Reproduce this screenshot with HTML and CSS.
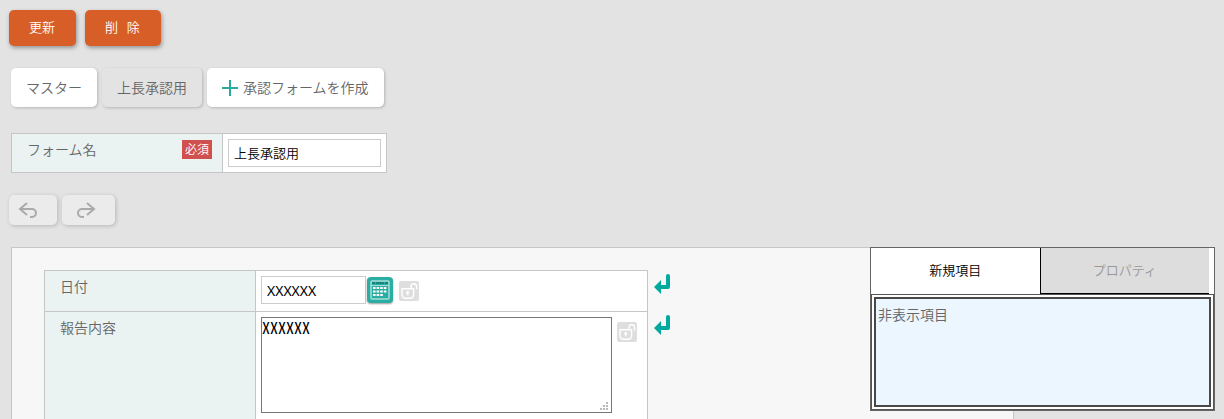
FILE: index.html
```html
<!DOCTYPE html>
<html lang="ja">
<head>
  <meta charset="UTF-8">
  <meta name="viewport" content="width=device-width, initial-scale=1.0">
  <title>承認フォーム編集</title>
  <link rel="stylesheet" href="styles.css">
</head>
<body>
  <svg class="symbols" width="0" height="0" aria-hidden="true">
    <symbol id="lock" viewBox="0 0 20 20">
      <rect width="20" height="20" rx="2" fill="#dedede"/>
      <path d="M3 7.8h11.6v6a3.4 3.4 0 0 1-3.4 3.4H6.4A3.4 3.4 0 0 1 3 13.8z" fill="none" stroke="#fff" stroke-width="1.4" stroke-linejoin="round"/>
      <path d="M12 7.5V5.6a2.8 2.8 0 0 1 5.6 0v2.6" fill="none" stroke="#fff" stroke-width="1.4"/>
      <circle cx="8.7" cy="11.6" r="1.5" fill="#fff"/>
      <path d="M8.7 11.5v3" stroke="#fff" stroke-width="1.2"/>
    </symbol>
    <symbol id="enter" viewBox="0 0 16 20">
      <path d="M12 2a2 2 0 0 1 4 0v11a2 2 0 0 1-2 2H7v5L0 13l7-7v5h5z" fill="#00a99d"/>
    </symbol>
  </svg>

  <div class="actions">
    <button class="btn-main" type="button">更新</button>
    <button class="btn-main" type="button">削&nbsp;&nbsp;&nbsp;除</button>
  </div>

  <div class="form-tabs">
    <button class="form-tab" type="button">マスター</button>
    <button class="form-tab current" type="button">上長承認用</button>
    <button class="form-tab" type="button">
      <svg width="16" height="16" viewBox="0 0 16 16" aria-hidden="true"><path d="M8 0v16M0 8h16" stroke="#2aaa9f" stroke-width="2"/></svg>
      <span>承認フォームを作成</span>
    </button>
  </div>

  <div class="form-name">
    <label for="formName">フォーム名 <span class="required">必須</span></label>
    <div class="form-name-value"><input id="formName" class="text" type="text" value="上長承認用"></div>
  </div>

  <div class="history">
    <button class="btn-history undo" type="button" aria-label="元に戻す">
      <svg width="20" height="18" viewBox="0 0 20 18"><path d="M9 2L2 8l7 6M2 8h12a4 4 0 0 1 0 8h-2" /></svg>
    </button>
    <button class="btn-history redo" type="button" aria-label="やり直す">
      <svg width="20" height="18" viewBox="0 0 20 18"><path d="M11 2l7 6-7 6M18 8H6a4 4 0 0 0 0 8h2" /></svg>
    </button>
  </div>

  <div class="workspace">
    <div class="canvas">
      <table class="fields">
        <tr>
          <th scope="row"><label for="date">日付</label></th>
          <td>
            <div class="field">
              <input id="date" class="text date" type="text" value="XXXXXX">
              <button class="calendar" type="button" aria-label="カレンダー">
                <svg width="20" height="20" viewBox="0 0 20 20">
                  <rect x="1" y="1" width="18" height="18" rx="1" fill="none" stroke="#a5ddd7" stroke-width="1.5"/>
                  <path d="M2 3h3M6 3h8M15 3h3" stroke="#16877e" stroke-width="2"/>
                  <path d="M1 5.5h18" stroke="#a5ddd7"/>
                  <path d="M3 8h14M3 11.5h14M3 15h10" stroke="#fff" stroke-width="2.2" stroke-dasharray="2.6 1"/>
                </svg>
              </button>
              <svg class="lock" width="20" height="20"><use href="#lock"/></svg>
            </div>
          </td>
          <td class="break"><svg width="16" height="20"><use href="#enter"/></svg></td>
        </tr>
        <tr class="report">
          <th scope="row"><label for="report">報告内容</label></th>
          <td>
            <div class="field">
              <div class="area">
                <textarea id="report">XXXXXX</textarea>
                <svg class="grip" width="8" height="8" viewBox="0 0 8 8" aria-hidden="true"><path d="M6 0h2v2H6zM3 3h2v2H3zM6 3h2v2H6zM0 6h2v2H0zM3 6h2v2H3zM6 6h2v2H6z" fill="#bbb"/></svg>
              </div>
              <svg class="lock" width="20" height="20"><use href="#lock"/></svg>
            </div>
          </td>
          <td class="break"><svg width="16" height="20"><use href="#enter"/></svg></td>
        </tr>
      </table>
    </div>

    <!-- floats over the right edge of the canvas -->
    <div class="panel">
      <div class="panel-tabs">
        <button class="panel-tab" type="button">新規項目</button>
        <button class="panel-tab off" type="button">プロパティ</button>
      </div>
      <div class="panel-body">
        <div class="hidden-items">非表示項目</div>
      </div>
    </div>
  </div>
</body>
</html>
```
FILE: styles.css
```css
* { box-sizing: border-box; }
body { display: flex; flex-direction: column; height: 100vh; margin: 0; padding: 10px 9px 0; overflow: hidden; background: #e3e3e3; color: #666; font: 14px/20px "Noto Sans CJK JP", sans-serif; font-weight: 350; }
button, input { font: inherit; }
button { margin: 0; border: none; cursor: pointer; }
svg { display: block; flex: none; }
.symbols { position: absolute; }

.actions { display: flex; gap: 9px; }
.btn-main { height: 36px; padding: 0 21px 2px 20px; border-radius: 5px; background: #d75f27; color: #fff; font-size: 13px; box-shadow: 1px 2px 4px rgba(0, 0, 0, 0.35); }

.form-tabs { display: flex; gap: 5px; margin: 22px 2px 0; }
.form-tab { display: flex; align-items: center; gap: 5px; height: 39px; padding: 0 15px; border-radius: 5px; background: #fff; color: #666; line-height: 16px; box-shadow: 1px 1px 3px rgba(0, 0, 0, 0.2); }
.form-tab { padding-bottom: 2px; }
.form-tab svg { margin-top: 2px; }
.form-tab.current { background: #e3e3e3; }

.form-name { display: flex; width: 376px; margin: 26px 2px 0; border: 1px solid #c6c6c6; background: #fff; }
.form-name label { display: flex; justify-content: space-between; width: 211px; padding: 6px 10px 0 15px; border-right: 1px solid #c6c6c6; background: #eaf3f2; line-height: 18px; }
.required { height: 19px; padding: 0 3px; background: #d05050; color: #fff; font-size: 12px; line-height: 18px; }
.form-name-value { flex: 1; padding: 5px; }
.text { display: block; width: 100%; height: 28px; padding: 0 5px 2px; border: 1px solid #ccc; background: #fff; color: #000; font-size: 13px; }

.history { display: flex; gap: 5px; margin-top: 22px; }
.btn-history { height: 30px; border-radius: 5px; background: #ebebeb; box-shadow: 1px 1px 4px rgba(0, 0, 0, 0.2); }
.btn-history path { fill: none; stroke: #aaa; stroke-width: 2; }
.undo { padding: 0 19px 0 9px; }
.redo { padding: 0 19px 0 14px; }

.workspace { position: relative; flex: 1; min-height: 0; margin-top: 22px; }
.canvas { height: 100%; margin: 0 201px 0 2px; padding: 22px 32px 0; overflow: hidden; border: 1px solid #c6c6c6; border-bottom: none; background: #f7f7f7; }
.fields { border-collapse: collapse; }
.fields th { width: 211px; padding: 6px 15px; border: 1px solid #c6c6c6; background: #eaf3f2; font-weight: inherit; line-height: 18px; text-align: left; vertical-align: top; }
.fields td { height: 41px; padding: 5px; border: 1px solid #c6c6c6; background: #fff; vertical-align: top; }
.fields td:nth-child(2) { width: 392px; }
.fields td.break { padding: 3px 6px; border: none; background: none; }
.report { height: 140px; }
.field { display: flex; align-items: flex-start; gap: 5px; }
.date { width: 105px; padding-bottom: 0; font-family: "Noto Sans", sans-serif; font-size: 14px; font-weight: 400; }
.lock { margin-top: 5px; }
.calendar { width: 26px; height: 26px; margin: 1px 0 0 -4px; padding: 3px; border-radius: 4px; background: #2aada2; box-shadow: 0 1px 2px rgba(0, 0, 0, 0.4); }
.calendar + .lock { margin-left: 1px; }
.area { position: relative; }
.grip { position: absolute; right: 4px; bottom: 3px; }
textarea { display: block; width: 351px; height: 96px; padding: 0; border: 1px solid #767676; resize: none; color: #000; font: 16px/18px "Noto Sans Mono CJK JP", "Liberation Mono", monospace; font-weight: 300; }

.panel { position: absolute; top: 0; right: 0; width: 345px; border: 1px solid #666; background: #fff; }
.panel-tabs { display: flex; height: 46px; padding-right: 5px; }
.panel-tab { flex: 1; padding: 0 0 2px; background: #fff; color: #000; font-size: 13px; }
.panel-tab.off { border-bottom: 1px solid #000; border-left: 1px solid #000; background: #ddd; color: #999; }
.panel-body { padding: 2px; border: 1px solid #555; }
.hidden-items { height: 110px; padding: 5px 2px; border: 2px solid #484848; background: #ebf6ff; }
```
